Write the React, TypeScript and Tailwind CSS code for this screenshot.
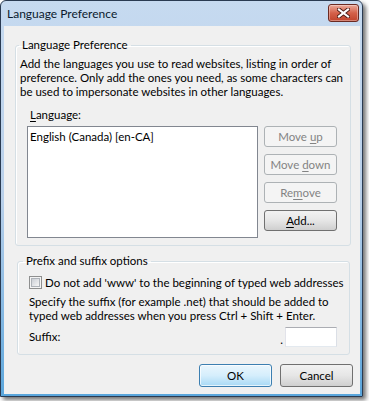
import type { ReactNode } from "react";

const Btn = ({
  children,
  disabled,
  primary,
  className = "",
}: {
  children: ReactNode;
  disabled?: boolean;
  primary?: boolean;
  className?: string;
}) => {
  let look =
    "border-[#707070] bg-linear-to-b from-[#f2f2f2] via-[#e6e6e6] to-[#cfcfcf] text-black";
  if (disabled) look = "border-[#adb2b5] bg-[#f4f4f4] text-[#838383]";
  if (primary)
    look =
      "border-[#3c7fb1] bg-linear-to-b from-[#eaf6fd] via-[#d5eefc] to-[#a7d9f5] text-black shadow-[inset_0_0_0_1px_rgba(255,255,255,0.7)]";
  return (
    <div
      className={`flex items-center justify-center rounded-[3px] border leading-[14px] ${look} ${className}`}
    >
      <span>{children}</span>
    </div>
  );
};

const U = ({ children }: { children: ReactNode }) => (
  <span className="underline underline-offset-2">{children}</span>
);

export default function App() {
  return (
    <div className="h-[401px] w-[369px] bg-white font-['Lato',sans-serif] text-[11.5px] text-black">
      <div className="flex h-[397px] w-[363px] flex-col rounded-t-[6px] border border-[#2a3b52] bg-linear-to-b from-[#c6daf0] via-[#b9d0ea] to-[#5aa6dc] shadow-[3px_3px_4px_rgba(0,0,0,0.55)]">
        {/* title bar */}
        <div className="flex h-[25px] items-start justify-between pl-[6px] pr-[3px]">
          <span className="mt-[5px] text-[12px] leading-[16px] text-[#0b1a2e]">
            Language Preference
          </span>
          <div className="mt-[3px] flex h-[18px] w-[31px] items-center justify-center rounded-[3px] border border-[#6b2a22] bg-linear-to-b from-[#e9a99b] via-[#d4614a] to-[#c0432c] shadow-[inset_0_0_0_1px_rgba(255,255,255,0.35)]">
            <svg width="13" height="10" viewBox="0 0 13 10">
              <path
                d="M2 1.5 L11 8.5 M11 1.5 L2 8.5"
                stroke="#4a1a14"
                strokeWidth="4"
                strokeLinecap="square"
              />
              <path
                d="M2 1.5 L11 8.5 M11 1.5 L2 8.5"
                stroke="#ffffff"
                strokeWidth="2.2"
                strokeLinecap="square"
              />
            </svg>
          </div>
        </div>

        {/* client area */}
        <div className="ml-[3px] mr-[2px] flex h-[368px] w-[356px] flex-col bg-[#f0f0f0] pt-[11px]">
          <fieldset className="ml-[11px] h-[209px] w-[336px] min-w-0 rounded-[3px] border border-[#d5dfe5] shadow-[inset_1px_1px_0_#fff]">
            <legend className="ml-[3px] px-[3px] leading-[16px]">Language Preference</legend>
            <div className="flex flex-col">
              <p className="whitespace-nowrap px-[4px] pt-[4px] leading-[14px]">
                Add the languages you use to read websites, listing in order of
                <br />
                preference. Only add the ones you need, as some characters can
                <br />
                be used to impersonate websites in other languages.
              </p>
              <span className="mt-[9px] pl-[14px] leading-[14px]">
                <U>L</U>anguage:
              </span>
              <div className="mt-[4px] flex gap-[6px] pl-[11px]">
                <div className="h-[112px] w-[231px] border border-[#828790] bg-white px-[2px] pt-[3px] leading-[14px]">
                  English (Canada) [en-CA]
                </div>
                <div className="flex flex-col gap-[7px]">
                  <Btn disabled className="h-[21px] w-[73px]">
                    Move <U>u</U>p
                  </Btn>
                  <Btn disabled className="h-[21px] w-[73px]">
                    Move <U>d</U>own
                  </Btn>
                  <Btn disabled className="h-[21px] w-[73px]">
                    Re<U>m</U>ove
                  </Btn>
                  <Btn className="h-[21px] w-[73px]">
                    <U>A</U>dd...
                  </Btn>
                </div>
              </div>
            </div>
          </fieldset>

          <fieldset className="ml-[13px] mt-[7px] h-[102px] w-[333px] min-w-0 rounded-[3px] border border-[#d5dfe5] shadow-[inset_1px_1px_0_#fff]">
            <legend className="ml-[5px] px-[3px] leading-[16px]">Prefix and suffix options</legend>
            <div className="flex flex-col pl-[11px]">
              <div className="mt-[7px] flex h-[13px] items-center gap-[3px]">
                <div className="flex h-[13px] w-[13px] items-center justify-center border border-[#8e8f8f] bg-[#f4f4f4]">
                  <div className="h-[9px] w-[9px] border border-[#aeb3b9] bg-linear-to-br from-[#cbcfd5] to-[#f6f6f6]" />
                </div>
                <span className="whitespace-nowrap leading-[14px]">
                  Do not add 'www' to the beginning of typed web addresses
                </span>
              </div>
              <p className="mt-[6px] whitespace-nowrap leading-[14px]">
                Specify the suffix (for example .net) that should be added to
                <br />
                typed web addresses when you press Ctrl + Shift + Enter.
              </p>
              <div className="mt-[4px] flex h-[20px] items-center pr-[12px]">
                <span className="flex-1 leading-[14px]">Suffix:</span>
                <span className="mr-[2px] mt-[6px] leading-[14px]">.</span>
                <div className="h-[20px] w-[52px] border border-[#abadb3] border-b-[#e3e9ef] border-l-[#e2e3ea] border-r-[#dbdfe6] bg-white" />
              </div>
            </div>
          </fieldset>

          <div className="mt-[9px] flex justify-end gap-[8px] pr-[7px]">
            <Btn primary className="h-[23px] w-[73px]">
              OK
            </Btn>
            <Btn className="h-[23px] w-[73px]">Cancel</Btn>
          </div>
        </div>
      </div>
    </div>
  );
}
